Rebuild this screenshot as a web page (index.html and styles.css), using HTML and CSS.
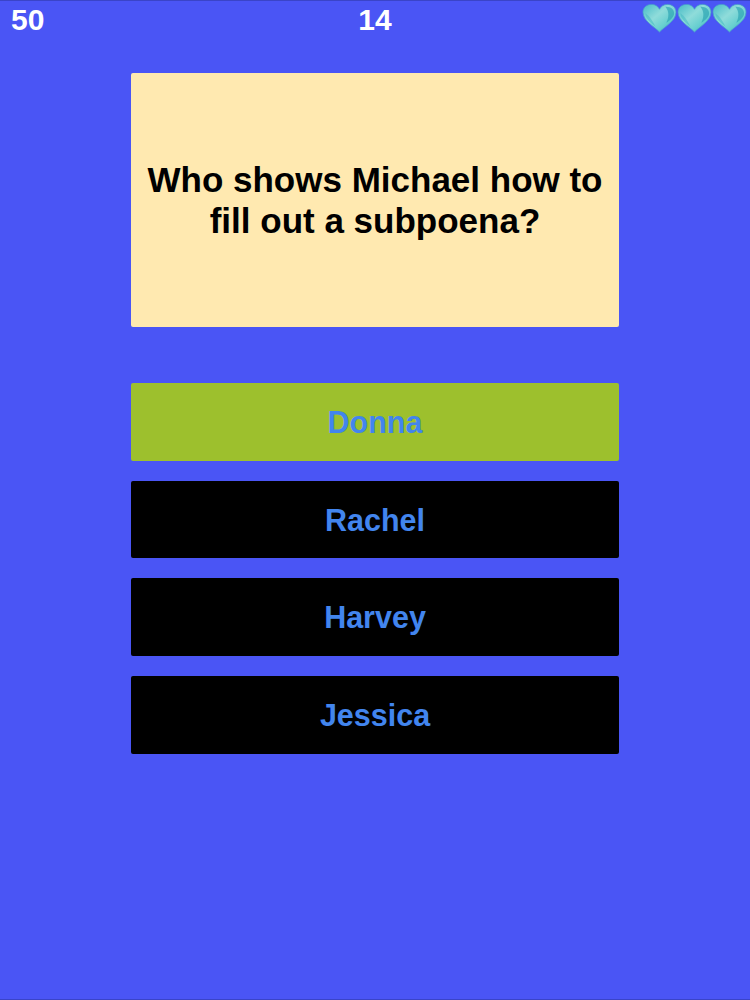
FILE: index.html
```html
<!DOCTYPE html>
<html lang="en">
<head>
<meta charset="utf-8">
<title>Quiz</title>
<link rel="stylesheet" href="styles.css">
</head>
<body>
<main class="screen">
  <svg class="defs" width="0" height="0" aria-hidden="true">
    <defs>
      <linearGradient id="heartFill" x1="0" y1="0.1" x2="0.9" y2="1">
        <stop offset="0" stop-color="#4fbfc9"/>
        <stop offset="0.4" stop-color="#8fdcda"/>
        <stop offset="0.7" stop-color="#68cfd0"/>
        <stop offset="1" stop-color="#3eb0be"/>
      </linearGradient>
      <symbol id="heart" viewBox="0 0 36 30">
        <path d="M18 29.500C12 23 1 18 1 9C1 4 5 1 10 1C13.500 1 16.500 3 18 6C19.500 3 22.500 1 26 1C31 1 35 4 35 9C35 18 24 23 18 29.500Z" fill="url(#heartFill)" stroke="#4a9fcb" stroke-width="0.8"/>
        <path d="M24 3.500C29 3 33 6 33 10C33 14 29 17 25 20C28 14 28 8 24 3.500Z" fill="#2fa5b4" opacity="0.7"/>
        <path d="M3.500 10C3.500 15 9 20 14 24C11 18 8 13 3.500 10Z" fill="#3fb8c2" opacity="0.5"/>
      </symbol>
    </defs>
  </svg>
  <header class="topbar">
    <span class="stat stat-score">50</span>
    <span class="stat">14</span>
    <div class="hearts">
      <svg class="heart"><use href="#heart"/></svg>
      <svg class="heart"><use href="#heart"/></svg>
      <svg class="heart"><use href="#heart"/></svg>
    </div>
  </header>
  <section class="quiz">
    <div class="question">
      <p class="question-text">Who shows Michael how to<br>fill out a subpoena?</p>
    </div>
    <div class="answers">
      <div class="answer answer-correct">Donna</div>
      <div class="answer">Rachel</div>
      <div class="answer">Harvey</div>
      <div class="answer">Jessica</div>
    </div>
  </section>
</main>
</body>
</html>
```

FILE: styles.css
```css
* {
  box-sizing: border-box;
}

html,
body {
  margin: 0;
  padding: 0;
}

body {
  width: 750px;
  height: 1000px;
  overflow: hidden;
  font-family: "Liberation Sans", Arial, sans-serif;
}

.screen {
  width: 750px;
  height: 1000px;
  background: #4a55f5;
  border-top: 1px solid #3a44c8;
  border-bottom: 1px solid #3a44c8;
  display: flex;
  flex-direction: column;
}

.defs {
  display: block;
  width: 0;
  height: 0;
}

.topbar {
  height: 72px;
  display: grid;
  grid-template-columns: 1fr auto 1fr;
  align-items: start;
  padding: 2px 3px 0;
}

.stat {
  color: #ffffff;
  font-size: 30px;
  font-weight: 700;
  line-height: 34px;
}

.stat-score {
  padding-left: 8px;
}

.hearts {
  display: flex;
  justify-content: flex-end;
}

.heart {
  width: 35px;
  height: 30px;
  display: block;
  filter: blur(0.4px);
}

.quiz {
  width: 488.500px;
  margin: 0 auto;
  display: flex;
  flex-direction: column;
  gap: 56px;
}

.question {
  height: 254px;
  background: #ffe9b0;
  border-radius: 2px;
  display: flex;
  align-items: center;
  justify-content: center;
}

.question-text {
  margin: 0;
  color: #000000;
  font-size: 35px;
  font-weight: 700;
  line-height: 41px;
  text-align: center;
}

.answers {
  display: flex;
  flex-direction: column;
  gap: 20px;
}

.answer {
  height: 77.700px;
  padding-top: 1px;
  background: #000000;
  border-radius: 2px;
  color: #4285ee;
  font-size: 30.500px;
  font-weight: 700;
  display: flex;
  align-items: center;
  justify-content: center;
}

.answer-correct {
  background: #9dc02d;
}
```
